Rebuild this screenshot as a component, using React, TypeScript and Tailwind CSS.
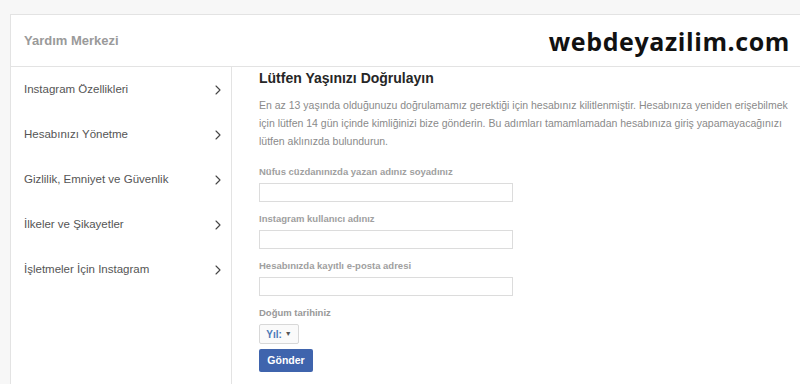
import { ChevronRight } from "lucide-react";

const menu = [
  "Instagram Özellikleri",
  "Hesabınızı Yönetme",
  "Gizlilik, Emniyet ve Güvenlik",
  "İlkeler ve Şikayetler",
  "İşletmeler İçin Instagram",
];

export default function App() {
  return (
    <div className="h-[384px] w-[800px] overflow-hidden bg-[#f7f7f7] pl-[10px] pt-[14px] font-['Liberation_Sans',Arial,sans-serif]">
      <div className="flex h-[400px] flex-col border-l border-t border-[#e3e3e3] bg-white">
        {/* header */}
        <div className="flex h-[52px] shrink-0 items-center justify-between border-b border-[#e3e3e3] pl-[13px] pr-[10px]">
          <span className="text-[13px] font-bold text-[#9a9a9a]">Yardım Merkezi</span>
          <span className="pt-[2px] font-['Open_Sans',sans-serif] text-[25px] font-bold tracking-[0.6px] text-[#111]">
            webdeyazilim.com
          </span>
        </div>

        <div className="flex flex-1">
          {/* sidebar */}
          <div className="w-[221px] shrink-0 border-r border-[#e3e3e3]">
            {menu.map((m) => (
              <div key={m} className="flex h-[45px] items-center justify-between pl-[13px] pr-[5px]">
                <span className="text-[11.5px] text-[#555]">{m}</span>
                <ChevronRight className="h-4 w-4 text-[#444]" strokeWidth={1.6} />
              </div>
            ))}
          </div>

          {/* content */}
          <div className="flex-1 pl-[27px] pr-[10px] pt-[1px]">
            <h1 className="text-[14px] font-bold leading-[20px] text-[#262626]">Lütfen Yaşınızı Doğrulayın</h1>
            <p className="mt-[8px] max-w-[536px] text-[10.5px] leading-[18px] text-[#8a8a8a]">
              En az 13 yaşında olduğunuzu doğrulamamız gerektiği için hesabınız kilitlenmiştir. Hesabınıza yeniden erişebilmek için lütfen 14 gün içinde kimliğinizi bize gönderin. Bu adımları tamamlamadan hesabınıza giriş yapamayacağınızı lütfen aklınızda bulundurun.
            </p>

            <div className="mt-[16px] flex flex-col">
              <Field label="Nüfus cüzdanınızda yazan adınız soyadınız" />
              <Field label="Instagram kullanıcı adınız" />
              <Field label="Hesabınızda kayıtlı e-posta adresi" />
              <label className="text-[9.5px] font-bold leading-[12px] text-[#999]">Doğum tarihiniz</label>
              <div className="mt-[5px] flex h-[20px] w-[40px] items-center justify-center gap-[3px] rounded-[2px] border border-[#d8d8d8] bg-[#fafafa] text-[10px] font-bold text-[#4a78b8]">
                Yıl:
                <span className="text-[7px] text-[#555]">▼</span>
              </div>
              <button className="mt-[5px] h-[23px] w-[54px] rounded-[2px] bg-[#3f64ad] text-[10.5px] font-bold text-white">
                Gönder
              </button>
            </div>
          </div>
        </div>
      </div>
    </div>
  );
}

function Field({ label }: { label: string }) {
  return (
    <div className="mb-[11px] flex flex-col">
      <label className="text-[9.5px] font-bold leading-[12px] text-[#a0a0a0]">{label}</label>
      <input className="mt-[5px] h-[19px] w-[254px] border border-[#dcdcdc] bg-white" />
    </div>
  );
}
